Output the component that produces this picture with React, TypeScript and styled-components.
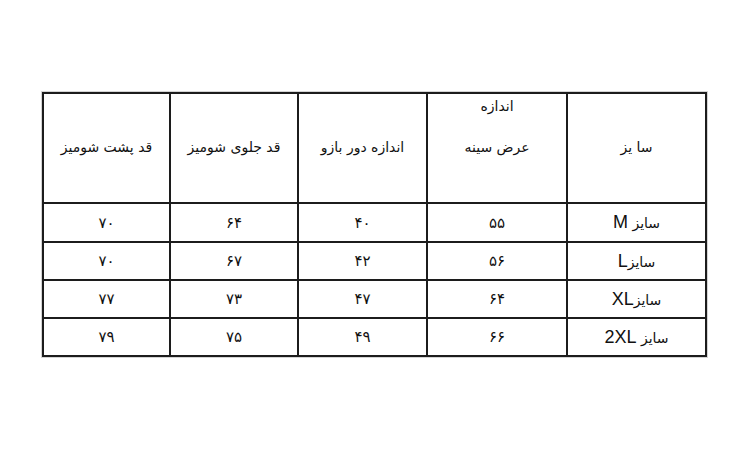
import React from "react";
import styled, { createGlobalStyle } from "styled-components";

const Global = createGlobalStyle`
  html, body { margin: 0; padding: 0; background: #ffffff; }
  body { width: 750px; height: 449px; overflow: hidden; }
`;

const Page = styled.div`
  padding: 92px 0 0 42px;
`;

const Table = styled.div`
  direction: rtl;
  display: grid;
  grid-template-columns: 137px 138px 127px 126px 125px;
  grid-template-rows: 108px 37px 36px 36px 36px;
  gap: 2px;
  width: max-content;
  background: #1c1c1c;
  border: 2px solid #1c1c1c;
  box-shadow: 0 0 0 1px #d4d4d4;
  font-family: "DejaVu Sans", sans-serif;
  color: #111;
`;

const Cell = styled.div`
  background: #fff;
  display: flex;
  align-items: center;
  justify-content: center;
  font-size: 14px;
  white-space: pre;
`;

const HeadCell = styled(Cell)`
  font-size: 14px;
  padding-bottom: 2px;
`;

const StackCell = styled.div`
  background: #fff;
  display: grid;
  grid-template-rows: 1fr auto 1fr;
  justify-items: center;
  font-size: 14px;
  white-space: nowrap;
`;

const TopLine = styled.span`
  align-self: start;
  padding-top: 4px;
`;

const MidLine = styled.span`
  padding-bottom: 2px;
`;

const SizeLabel = styled.span`
  font-size: 14px;
`;

const Latin = styled.span`
  font-family: "Liberation Sans", Arial, sans-serif;
  font-size: 18px;
`;

const Num = styled(Cell)`
  font-size: 15px;
`;

type Row = { label: string; latin: string; space: boolean; vals: string[] };

const rows: Row[] = [
  { label: "سایز", latin: "M", space: true, vals: ["۵۵", "۴۰", "۶۴", "۷۰"] },
  { label: "سایز", latin: "L", space: false, vals: ["۵۶", "۴۲", "۶۷", "۷۰"] },
  { label: "سایز", latin: "XL", space: false, vals: ["۶۴", "۴۷", "۷۳", "۷۷"] },
  { label: "سایز", latin: "2XL", space: true, vals: ["۶۶", "۴۹", "۷۵", "۷۹"] },
];

export default function App() {
  return (
    <>
      <Global />
      <Page>
        <Table>
          <HeadCell>سا یز</HeadCell>
          <StackCell>
            <TopLine>اندازه</TopLine>
            <MidLine>عرض سینه</MidLine>
            <span />
          </StackCell>
          <HeadCell>اندازه دور بازو</HeadCell>
          <HeadCell>قد جلوی شومیز</HeadCell>
          <HeadCell>قد پشت شومیز</HeadCell>
          {rows.map((r) => (
            <React.Fragment key={r.latin}>
              <Cell>
                <SizeLabel>
                  {r.label + (r.space ? " " : "")}
                  <Latin>{r.latin}</Latin>
                </SizeLabel>
              </Cell>
              {r.vals.map((v, i) => (
                <Num key={i}>{v}</Num>
              ))}
            </React.Fragment>
          ))}
        </Table>
      </Page>
    </>
  );
}
